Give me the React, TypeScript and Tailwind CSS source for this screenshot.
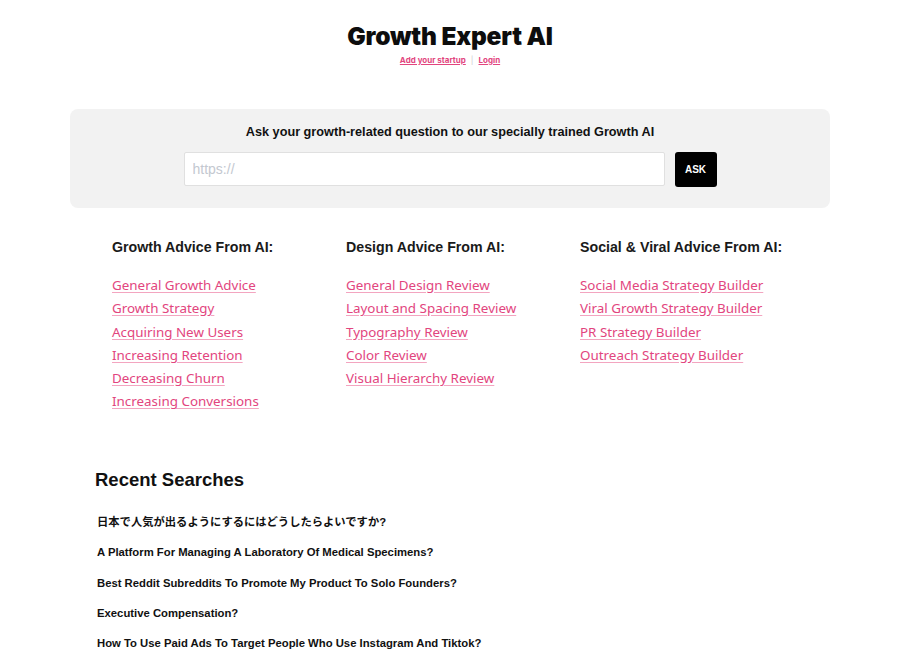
import React from "react";

const GROWTH = [
  "General Growth Advice",
  "Growth Strategy",
  "Acquiring New Users",
  "Increasing Retention",
  "Decreasing Churn",
  "Increasing Conversions",
];
const DESIGN = [
  "General Design Review",
  "Layout and Spacing Review",
  "Typography Review",
  "Color Review",
  "Visual Hierarchy Review",
];
const SOCIAL = [
  "Social Media Strategy Builder",
  "Viral Growth Strategy Builder",
  "PR Strategy Builder",
  "Outreach Strategy Builder",
];
const RECENT = [
  "日本で人気が出るようにするにはどうしたらよいですか?",
  "A Platform For Managing A Laboratory Of Medical Specimens?",
  "Best Reddit Subreddits To Promote My Product To Solo Founders?",
  "Executive Compensation?",
  "How To Use Paid Ads To Target People Who Use Instagram And Tiktok?",
];

function AdviceColumn({ title, links }: { title: string; links: string[] }) {
  return (
    <div className="w-[234px]">
      <h3 className="text-[14.2px] font-bold text-[#1a1a1a] leading-[18px] font-['Liberation_Sans',Arial,sans-serif]">
        {title}
      </h3>
      <ul className="mt-[17px] flex flex-col">
        {links.map((link) => (
          <li key={link} className="h-[23.3px]">
            <a
              href="#"
              className="text-[13.4px] leading-[19px] text-[#e2457e] underline decoration-[#f3a5c0] underline-offset-2 font-['Noto_Sans',sans-serif]"
            >
              {link}
            </a>
          </li>
        ))}
      </ul>
    </div>
  );
}

export default function App() {
  return (
    <div className="min-h-screen bg-white font-['Liberation_Sans',Arial,sans-serif]">
      <header className="flex flex-col items-center pt-[21px]">
        <h1 className="text-[24.5px] leading-[30px] font-black tracking-[-0.2px] text-[#0d0d0d] font-['Inter',sans-serif]">
          Growth Expert AI
        </h1>
        <div className="mt-[3px] flex items-center gap-[5px] text-[8px] font-bold font-['Inter',sans-serif]">
          <a href="#" className="text-[#e2457e] underline">
            Add your startup
          </a>
          <span className="text-[#ccc] font-normal">|</span>
          <a href="#" className="text-[#e2457e] underline">
            Login
          </a>
        </div>
      </header>

      <section className="mx-[70px] mt-[43px] rounded-[8px] bg-[#f2f2f2] pt-[15px] pb-[21px]">
        <p className="text-center text-[12.7px] leading-[16px] font-bold text-[#111]">
          Ask your growth-related question to our specially trained Growth AI
        </p>
        <div className="mt-[12px] flex justify-center gap-[10px]">
          <input
            placeholder="https://"
            className="h-[34px] w-[481px] rounded-[2px] border border-[#e0e0e0] bg-white px-[8px] text-[14px] text-[#333] placeholder:text-[#c3c8d0] outline-none"
          />
          <button className="h-[35px] w-[42px] rounded-[3px] bg-black text-[10px] font-bold text-white">
            ASK
          </button>
        </div>
      </section>

      <section className="mt-[30px] flex pl-[112px]">
        <AdviceColumn title="Growth Advice From AI:" links={GROWTH} />
        <AdviceColumn title="Design Advice From AI:" links={DESIGN} />
        <AdviceColumn title="Social & Viral Advice From AI:" links={SOCIAL} />
      </section>

      <section className="mt-[56px] pl-[95px]">
        <h2 className="text-[18.5px] leading-[22px] font-bold text-[#111]">Recent Searches</h2>
        <ul className="mt-[24px] flex flex-col pl-[2px]">
          {RECENT.map((q) => (
            <li
              key={q}
              className="h-[30.4px] text-[11.3px] leading-[14px] font-bold text-[#111] font-['Liberation_Sans','Noto_Sans_CJK_JP',sans-serif]"
            >
              {q}
            </li>
          ))}
        </ul>
      </section>
    </div>
  );
}
